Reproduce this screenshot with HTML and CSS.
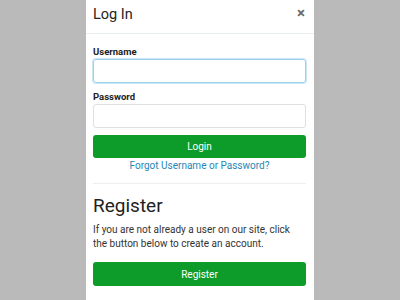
FILE: index.html
```html
<!DOCTYPE html>
<html>
<head>
<meta charset="utf-8">
<link rel="stylesheet" href="styles.css">
</head>
<body>
<div class="modal">
  <div class="modal-header">
    <h4 class="title">Log In</h4>
    <span class="close">×</span>
  </div>
  <div class="modal-body">
    <label class="label">Username</label>
    <div class="input focus"></div>
    <label class="label">Password</label>
    <div class="input"></div>
    <button class="btn">Login</button>
    <a class="forgot">Forgot Username or Password?</a>
    <hr class="divider">
    <h3 class="reg-title">Register</h3>
    <p class="reg-text">If you are not already a user on our site, click the button below to create an account.</p>
    <button class="btn btn-reg">Register</button>
  </div>
</div>
</body>
</html>
```
FILE: styles.css
```css
html, body { margin: 0; padding: 0; }
body {
  background: #bababa;
  font-family: Roboto, "Liberation Sans", sans-serif;
  color: #222;
  height: 300px;
  overflow: hidden;
}
.modal {
  width: 228px;
  margin: 0 auto;
  background: #fff;
  height: 300px;
}
.modal-header {
  display: flex;
  align-items: flex-start;
  justify-content: space-between;
  height: 34px;
  box-sizing: border-box;
  padding: 6px 9px 0 7px;
  border-bottom: 1px solid #e6eef0;
}
.title {
  margin: 0;
  font-size: 14.5px;
  line-height: 18px;
  font-weight: 400;
  color: #222;
}
.close {
  font-size: 15px;
  line-height: 14px;
  font-weight: 700;
  color: #6a6a6a;
}
.modal-body {
  padding: 11px 8px 0 7px;
  display: flex;
  flex-direction: column;
}
.label {
  font-size: 9.5px;
  font-weight: 700;
  color: #222;
  line-height: 14px;
}
.input {
  height: 24px;
  box-sizing: border-box;
  border: 1px solid #e0e0e0;
  border-radius: 3px;
  margin-bottom: 7px;
}
.input.focus {
  border-color: #9fd0ea;
  box-shadow: 0 0 0 1px #cbe7f6;
}
.btn {
  height: 23px;
  border: 0;
  border-radius: 3px;
  background: #0d9c29;
  color: #fff;
  font-family: Roboto, "Liberation Sans", sans-serif;
  font-size: 10px;
  padding: 0;
}
.forgot {
  text-align: center;
  font-size: 10px;
  color: #1f87b6;
  line-height: 16px;
}
.divider {
  width: 100%;
  border: 0;
  border-top: 1px solid #eee;
  margin: 9px 0 10px;
}
.reg-title {
  margin: 0;
  font-size: 19px;
  font-weight: 400;
  color: #222;
  line-height: 24px;
}
.reg-text {
  margin: 5px 0 11px;
  font-size: 10px;
  line-height: 14px;
  color: #333;
}
.btn-reg { height: 24px; }
```
